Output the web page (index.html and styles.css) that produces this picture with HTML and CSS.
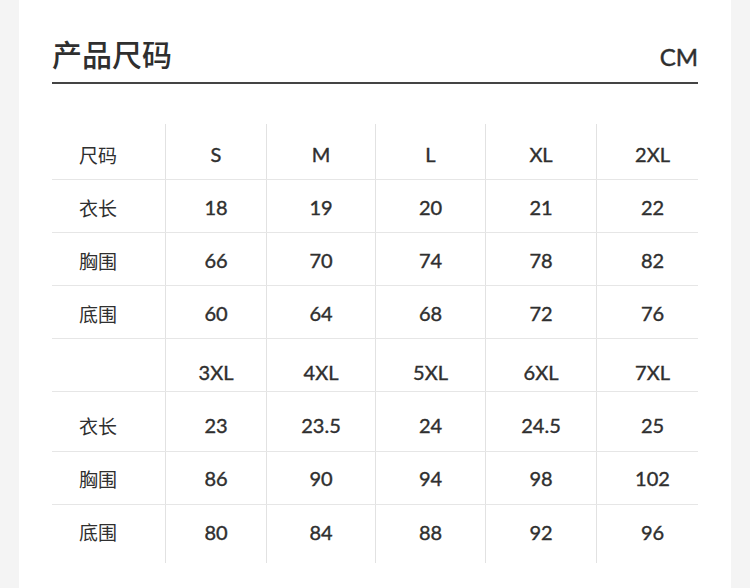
FILE: index.html
```html
<!DOCTYPE html>
<html lang="zh">
<head>
<meta charset="utf-8">
<title>产品尺码</title>
<link rel="stylesheet" href="styles.css">
</head>
<body>
<div class="panel">
  <div class="header">
    <h1 class="title">产品尺码</h1>
    <span class="unit">CM</span>
  </div>
  <div class="size-table">
    <div class="row r1">
      <div class="cell label">尺码</div><div class="cell">S</div><div class="cell">M</div><div class="cell">L</div><div class="cell">XL</div><div class="cell last">2XL</div>
    </div>
    <div class="row r2">
      <div class="cell label">衣长</div><div class="cell">18</div><div class="cell">19</div><div class="cell">20</div><div class="cell">21</div><div class="cell last">22</div>
    </div>
    <div class="row r3">
      <div class="cell label">胸围</div><div class="cell">66</div><div class="cell">70</div><div class="cell">74</div><div class="cell">78</div><div class="cell last">82</div>
    </div>
    <div class="row r4">
      <div class="cell label">底围</div><div class="cell">60</div><div class="cell">64</div><div class="cell">68</div><div class="cell">72</div><div class="cell last">76</div>
    </div>
    <div class="row r5">
      <div class="cell label"></div><div class="cell">3XL</div><div class="cell">4XL</div><div class="cell">5XL</div><div class="cell">6XL</div><div class="cell last">7XL</div>
    </div>
    <div class="row r6">
      <div class="cell label">衣长</div><div class="cell">23</div><div class="cell">23.5</div><div class="cell">24</div><div class="cell">24.5</div><div class="cell last">25</div>
    </div>
    <div class="row r7">
      <div class="cell label">胸围</div><div class="cell">86</div><div class="cell">90</div><div class="cell">94</div><div class="cell">98</div><div class="cell last">102</div>
    </div>
    <div class="row r8">
      <div class="cell label">底围</div><div class="cell">80</div><div class="cell">84</div><div class="cell">88</div><div class="cell">92</div><div class="cell last">96</div>
    </div>
  </div>
</div>
</body>
</html>
```
FILE: styles.css
```css
html, body {
  margin: 0;
  padding: 0;
  background: #f4f4f4;
}

.panel {
  margin: 0 19px;
  height: 588px;
  background: #ffffff;
  padding: 0 33px;
  box-sizing: border-box;
  color: #2f2f2f;
  font-family: "Lato", "Noto Sans CJK SC", sans-serif;
}

.header {
  display: flex;
  justify-content: space-between;
  align-items: baseline;
  padding-top: 33px;
  padding-bottom: 9px;
  border-bottom: 2px solid #444444;
}

.title {
  margin: 0;
  font-family: "Noto Sans CJK SC", sans-serif;
  font-size: 30px;
  font-weight: 500;
  line-height: 40px;
  color: #2f2f2f;
}

.unit {
  font-family: "Lato", sans-serif;
  font-size: 24px;
  font-weight: 400;
  -webkit-text-stroke: 0.45px #2f2f2f;
  color: #2f2f2f;
}

.size-table {
  margin-top: 40px;
}

.row {
  display: grid;
  grid-template-columns: 113px 101px 109px 110px 111px 102px;
  border-bottom: 1px solid #e6e6e6;
  box-sizing: border-box;
}

.cell {
  display: flex;
  align-items: center;
  justify-content: center;
  border-left: 1px solid #e2e2e2;
  font-size: 20px;
  font-weight: 400;
  -webkit-text-stroke: 0.4px #2f2f2f;
  box-sizing: border-box;
}

.cell.label {
  border-left: none;
  justify-content: flex-start;
  padding-left: 27px;
  font-family: "Noto Sans CJK SC", sans-serif;
  font-weight: 400;
  font-size: 19px;
  -webkit-text-stroke: 0;
}

.cell.last {
  padding-left: 10px;
}

.r1 { height: 56px; }
.r1 .cell { padding-top: 5px; }
.r2, .r3, .r4 { height: 53px; }
.r2 .cell, .r3 .cell, .r4 .cell { padding-top: 2px; }
.r5 { height: 53px; }
.r5 .cell { padding-top: 14px; }
.r6 { height: 60px; }
.r6 .cell { padding-top: 7px; }
.r7 { height: 53px; }
.r8 { height: 58px; border-bottom: none; }
.r8 .cell { padding-bottom: 5px; }
```
